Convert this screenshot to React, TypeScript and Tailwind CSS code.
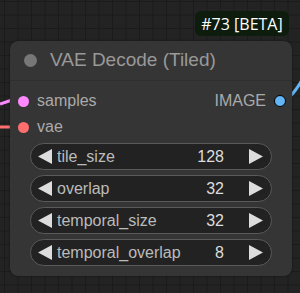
import { Fragment } from "react";

const widgets = [
	{ name: "tile_size", value: "128" },
	{ name: "overlap", value: "32" },
	{ name: "temporal_size", value: "32" },
	{ name: "temporal_overlap", value: "8" },
];

const Arrow = ({ dir }: { dir: "left" | "right" }) => (
	<svg width="14" height="15" viewBox="0 0 14 15" className="shrink-0">
		{dir === "left" ? (
			<polygon points="14,0 14,15 0,7.5" fill="#dddddd" />
		) : (
			<polygon points="0,0 0,15 14,7.5" fill="#dddddd" />
		)}
	</svg>
);

const App = () => {
	return (
		<div className="relative w-[300px] h-[293px] overflow-hidden bg-[#232323] bg-[linear-gradient(#1b1b1b_1px,transparent_1px),linear-gradient(90deg,#1b1b1b_1px,transparent_1px)] bg-[size:13.5px_13.5px] bg-[position:4px_1px] font-['Liberation_Sans',Arial,sans-serif]">
			{/* links */}
			<svg className="absolute inset-0" width="300" height="293">
				<path d="M0 104 L12 100" stroke="#ff88ff" strokeWidth="3" fill="none" />
				<path d="M0 127 L12 127" stroke="#ff6e6e" strokeWidth="3" fill="none" />
				<path d="M286 100 Q294 94 302 80" stroke="#64b5f6" strokeWidth="3" fill="none" />
			</svg>

			{/* badge */}
			<div className="absolute left-[195px] top-[11px] w-[94px] h-[25px] rounded-md bg-[#0d1c0d] flex items-center justify-center text-white text-[16px] font-['Open_Sans',sans-serif]">
				#73&nbsp;[BETA]
			</div>

			{/* node */}
			<div className="absolute left-[10px] top-[41px] w-[282px] h-[235px] rounded-lg bg-[#353535] shadow-[0_0_2px_rgba(0,0,0,0.6)]">
				<div className="h-[40px] flex items-center border-b border-[#2e2e2e]">
					<span className="ml-[14px] w-[13px] h-[13px] rounded-full bg-[#777]" />
					<span className="ml-[13px] text-[19px] text-[#999]">VAE Decode (Tiled)</span>
				</div>

				<div className="pt-[7px]">
					<div className="relative h-[26px] flex items-center text-[16px] text-[#aaa]">
						<span className="absolute left-[8px] w-[11px] h-[11px] rounded-full bg-[#ff88ff]" />
						<span className="ml-[27px]">samples</span>
						<span className="ml-auto mr-[26px]">IMAGE</span>
						<span className="absolute right-[6px] w-[12px] h-[12px] rounded-full bg-[#64b5f6] border border-black" />
					</div>
					<div className="relative h-[26px] flex items-center text-[16px] text-[#aaa]">
						<span className="absolute left-[8px] w-[11px] h-[11px] rounded-full bg-[#ff6e6e]" />
						<span className="ml-[27px]">vae</span>
					</div>
				</div>

				<div className="mt-[3px] flex flex-col gap-[5px] px-[20px]">
					{widgets.map((w) => (
						<Fragment key={w.name}>
							<div className="h-[27px] rounded-full border border-[#5a5a5a] bg-[#222] flex items-center pl-[7px] pr-[8px] text-[16px]">
								<Arrow dir="left" />
								<span className="ml-[5px] text-[#bbb]">{w.name}</span>
								<span className="ml-auto mr-[25px] text-[#ddd]">{w.value}</span>
								<Arrow dir="right" />
							</div>
						</Fragment>
					))}
				</div>
			</div>
		</div>
	);
};

export default App;
